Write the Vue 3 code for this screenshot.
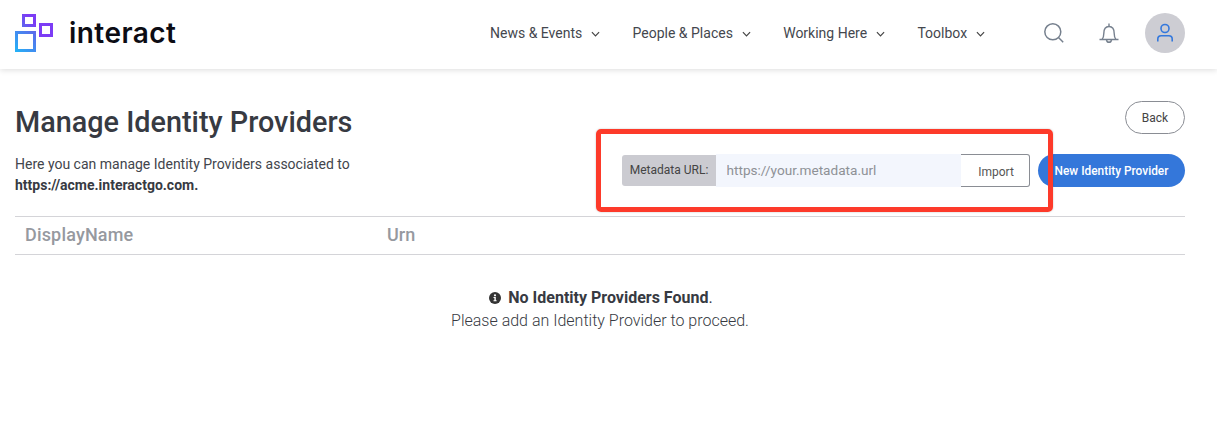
<script setup>
const navItems = ['News & Events', 'People & Places', 'Working Here', 'Toolbox']
</script>

<template>
  <div class="page">
    <header class="header">
      <div class="brand">
        <svg class="logo" width="40" height="40" viewBox="0 0 40 40" fill="none">
          <defs>
            <linearGradient id="lg" x1="0" y1="39" x2="21" y2="18" gradientUnits="userSpaceOnUse">
              <stop offset="0" stop-color="#22b4f7" />
              <stop offset="1" stop-color="#5f66ea" />
            </linearGradient>
            <linearGradient id="lp" x1="7" y1="14" x2="21" y2="1" gradientUnits="userSpaceOnUse">
              <stop offset="0" stop-color="#5a68ee" />
              <stop offset="0.6" stop-color="#7c3cf5" />
            </linearGradient>
          </defs>
          <rect x="8.5" y="2.5" width="11" height="10" stroke="url(#lp)" stroke-width="3" />
          <rect x="25.5" y="11.5" width="11" height="11" stroke="#7c3cf5" stroke-width="3" />
          <rect x="1.5" y="19.5" width="18" height="18" stroke="url(#lg)" stroke-width="3" />
        </svg>
        <span class="wordmark">interact</span>
      </div>
      <nav class="nav">
        <a v-for="item in navItems" :key="item" class="nav-item">
          <span>{{ item }}</span>
          <svg width="9" height="6" viewBox="0 0 10 6" fill="none">
            <path d="M1 1l4 4 4-4" stroke="#444" stroke-width="1.3" />
          </svg>
        </a>
      </nav>
      <div class="actions">
        <svg class="icon" width="22" height="22" viewBox="0 0 22 22" fill="none">
          <circle cx="9.8" cy="9.8" r="8" stroke="#76808e" stroke-width="1.5" />
          <path d="M15.5 15.5l4.7 4.7" stroke="#76808e" stroke-width="1.5" />
        </svg>
        <svg class="icon" width="22" height="22" viewBox="0 0 22 22" fill="none">
          <path d="M1.5 17.5h19M4 17.5c1.5-1.5 1.8-3 1.8-6C5.800 7 8 4.500 11 4.500s5.200 2.500 5.200 7c0 3 .3 4.500 1.800 6" stroke="#76808e" stroke-width="1.4" />
          <path d="M8.500 18c.3 1.500 1.200 2.300 2.500 2.300s2.200-.8 2.500-2.300M11 1.500v3" stroke="#76808e" stroke-width="1.4" />
        </svg>
        <div class="avatar">
          <svg width="18" height="20" viewBox="0 0 18 20" fill="none">
            <circle cx="9" cy="5.500" r="4" stroke="#3478dc" stroke-width="1.6" />
            <path d="M1.800 18.500v-2.500c0-2 1.400-3.300 3.300-3.300h7.800c1.900 0 3.300 1.300 3.300 3.300v2.500" stroke="#3478dc" stroke-width="1.600" />
          </svg>
        </div>
      </div>
    </header>

    <main class="content">
      <div class="top">
        <div class="intro">
          <h1>Manage Identity Providers</h1>
          <p>Here you can manage Identity Providers associated to<br /><strong>https://acme.interactgo.com.</strong></p>
        </div>
        <div class="controls">
          <button class="back">Back</button>
          <div class="tools">
            <div class="import-group">
              <span class="addon">Metadata URL:</span>
              <input class="url" type="text" placeholder="https://your.metadata.url" />
              <button class="import">Import</button>
            </div>
            <button class="primary">New Identity Provider</button>
          </div>
        </div>
      </div>

      <div class="table-head">
        <div class="col-name">DisplayName</div>
        <div>Urn</div>
      </div>

      <div class="empty">
        <div class="empty-title">
          <svg width="12" height="12" viewBox="0 0 12 12">
            <circle cx="6" cy="6" r="6" fill="#333" />
            <circle cx="6" cy="3.300" r="1.100" fill="#fff" />
            <path d="M4.500 5h2.300v3.300h.8v1H4.500v-1h.9V6h-.9z" fill="#fff" />
          </svg>
          <span><strong>No Identity Providers Found</strong>.</span>
        </div>
        <div class="empty-sub">Please add an Identity Provider to proceed.</div>
      </div>
    </main>

    <div class="annotation"></div>
  </div>
</template>

<style scoped>
.page {
  position: relative;
  height: 431px;
  overflow: hidden;
  background: #fff;
  font-family: Roboto, "Liberation Sans", sans-serif;
  color: #3a3d45;
}
.header {
  height: 69px;
  box-sizing: border-box;
  display: flex;
  align-items: center;
  padding: 0 32px 0 15px;
  background: #fff;
  box-shadow: 0 1px 6px rgba(0, 0, 0, 0.14);
}
.brand {
  display: flex;
  align-items: center;
  gap: 14px;
  width: 475px;
}
.logo {
  margin-top: -3px;
}
.wordmark {
  font-family: Inter, "Noto Sans", sans-serif;
  font-size: 28px;
  font-weight: 600;
  letter-spacing: 0.45px;
  color: #0c0c14;
  margin-top: -3px;
}
.nav {
  display: flex;
  gap: 32.3px;
  font-size: 14px;
  color: #44474e;
  margin-top: -4px;
}
.nav-item {
  display: flex;
  align-items: center;
  gap: 9px;
}
.nav-item svg {
  margin-top: 3px;
}
.actions {
  display: flex;
  align-items: center;
  margin-left: auto;
  margin-top: -4px;
}
.icon + .icon {
  margin-left: 33px;
}
.avatar {
  width: 40px;
  height: 40px;
  margin-left: 25px;
  border-radius: 50%;
  background: #cdcdd3;
  display: flex;
  align-items: center;
  justify-content: center;
}
.content {
  padding: 0 32px 0 15px;
}
.top {
  display: flex;
  justify-content: space-between;
  height: 147px;
  box-sizing: border-box;
}
.intro h1 {
  margin: 35px 0 0;
  font-size: 28.8px;
  line-height: 36px;
  font-weight: 500;
  color: #373a42;
}
.intro p {
  margin: 14px 0 0;
  font-size: 14px;
  line-height: 21px;
  color: #42454c;
}
.intro strong {
  font-weight: 700;
  color: #373a42;
}
.controls {
  display: flex;
  flex-direction: column;
  align-items: flex-end;
  padding-top: 32px;
}
.back {
  width: 60px;
  height: 33px;
  padding: 0;
  border: 1px solid #8a8d94;
  border-radius: 17px;
  background: #fff;
  font: 12px Roboto, sans-serif;
  color: #444;
}
.tools {
  display: flex;
  align-items: stretch;
  margin-top: 20px;
}
.import-group {
  display: flex;
  height: 33px;
  align-items: stretch;
}
.addon {
  width: 94px;
  height: 31px;
  margin-top: 1px;
  display: flex;
  align-items: center;
  justify-content: center;
  box-sizing: border-box;
  padding-bottom: 1px;
  background: #cbcbd1;
  border-radius: 3px 0 0 3px;
  font-size: 12px;
  color: #444;
}
.url {
  width: 245px;
  height: 33px;
  box-sizing: border-box;
  padding: 0 10.5px 2px;
  border: 0;
  background: #f3f6fd;
  font: 13.6px Roboto, sans-serif;
  outline: none;
}
.url::placeholder {
  color: #8e9196;
  opacity: 1;
}
.import {
  width: 69px;
  height: 33px;
  padding: 2px 0 0 2px;
  box-sizing: border-box;
  border: 1px solid #8a8d94;
  border-left: 0;
  border-radius: 0 3px 3px 0;
  background: #fff;
  font: 12px Roboto, sans-serif;
  color: #555;
}
.primary {
  width: 147px;
  height: 33px;
  margin-left: 8px;
  padding: 0;
  border: 0;
  border-radius: 17px;
  background: #3477da;
  color: #fff;
  font: 500 11.9px Roboto, sans-serif;
}
.table-head {
  display: flex;
  height: 39px;
  align-items: center;
  box-sizing: border-box;
  padding: 0 0 2px 10px;
  border-top: 1px solid #d4d4d8;
  border-bottom: 1px solid #d4d4d8;
  font-size: 18px;
  font-weight: 500;
  color: #96999f;
}
.col-name {
  width: 362px;
  letter-spacing: 0.17px;
}
.empty {
  text-align: center;
  margin-top: 31px;
}
.empty-title {
  display: flex;
  justify-content: center;
  align-items: center;
  gap: 7px;
  padding-left: 2px;
  font-size: 16px;
  line-height: 23px;
  color: #373a42;
}
.empty-sub {
  font-size: 16px;
  line-height: 23px;
  font-weight: 300;
  color: #373a42;
}
.annotation {
  position: absolute;
  left: 595.5px;
  top: 129px;
  width: 457.5px;
  height: 83px;
  box-sizing: border-box;
  border: 5px solid #fd3a2a;
  border-radius: 5px;
  box-shadow: 0 0 2px rgba(0, 0, 0, 0.25);
  pointer-events: none;
}
</style>

<style>
html, body {
  margin: 0;
  background: #fff;
}
</style>
